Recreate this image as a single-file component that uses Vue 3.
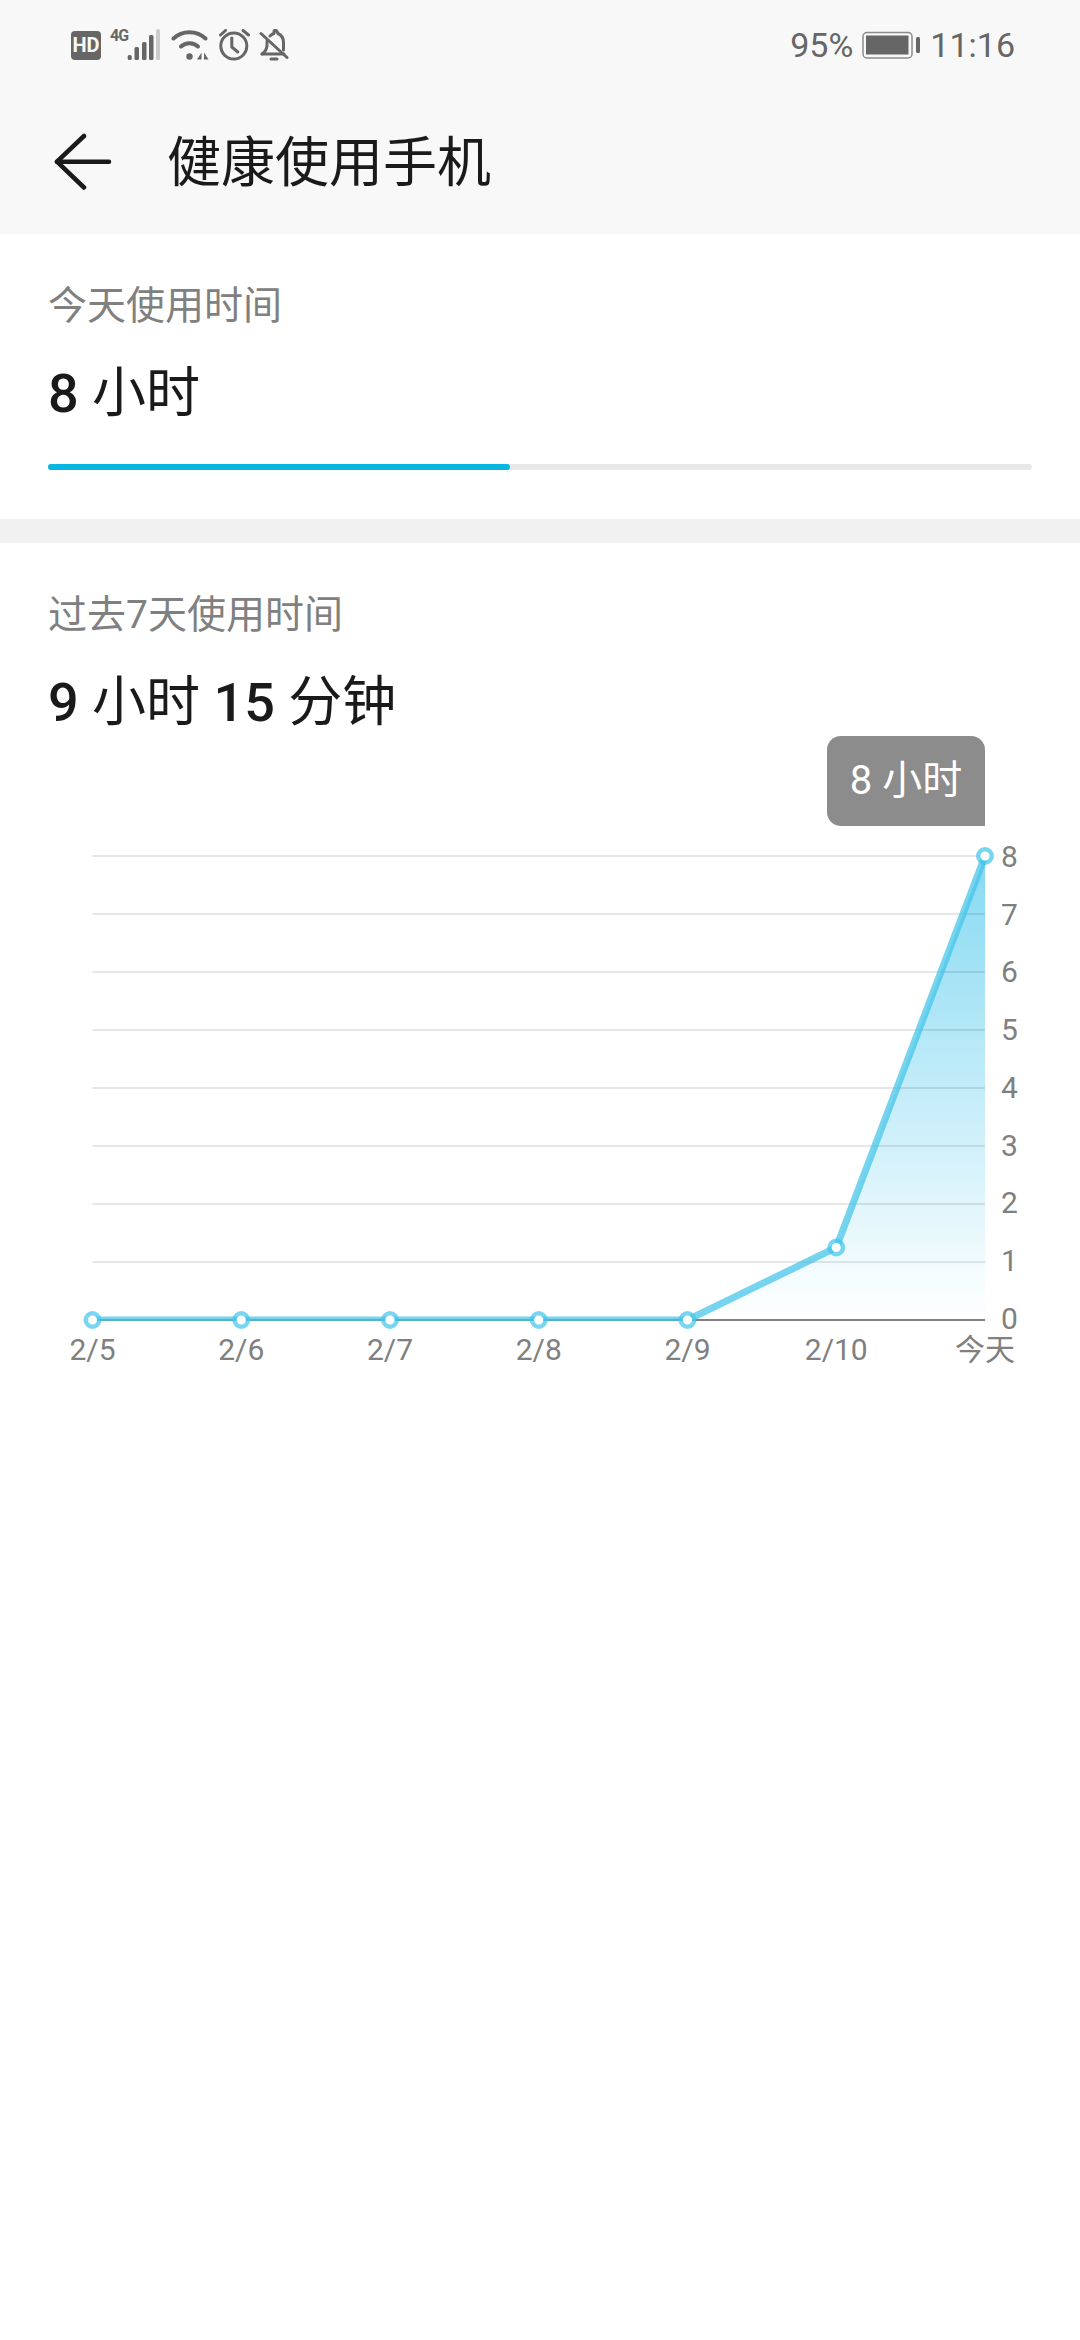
<script setup>
// 健康使用手机 - usage screen, chart drawn from the data below
const days = ['2/5', '2/6', '2/7', '2/8', '2/9', '2/10', '今天']
const hours = [0, 0, 0, 0, 0, 1.25, 8]

const left = 92.5
const right = 985
const base = 1320
const step = 58

const xAt = (i) => left + (i * (right - left)) / 6
const yAt = (v) => base - v * step

const points = hours.map((h, i) => ({ x: xAt(i), y: yAt(h) }))
const linePath = points.map((p) => `${p.x},${p.y}`).join(' ')
const areaPath = `${left},${base} ${linePath} ${right},${base}`
const gridLines = [1, 2, 3, 4, 5, 6, 7, 8].map(yAt)
const yLabels = [0, 1, 2, 3, 4, 5, 6, 7, 8]
// the axis numbers sit a little closer together than the grid lines
const tickY = (v) => yAt(v) + 8.7 + v * 0.29
</script>

<template>
  <div class="page">
    <header class="top">
      <div class="status">
        <div class="status-left">
          <div class="hd">HD</div>
          <div class="net">
            <span class="net-4g">4G</span>
            <svg class="signal" width="34" height="32" viewBox="128 29 34 32">
              <rect x="128.7" y="55" width="4" height="5" rx="1.5" fill="#666" />
              <rect x="135.5" y="47" width="4.5" height="13" rx="1.5" fill="#666" />
              <rect x="143" y="42" width="4.5" height="18" rx="1.5" fill="#666" />
              <rect x="150" y="35" width="4.5" height="25" rx="1.5" fill="#666" />
              <rect x="157" y="29" width="4" height="31" rx="1.5" fill="#ccc" />
            </svg>
          </div>
          <svg class="wifi" width="38" height="32" viewBox="170 29 38 32" fill="none" stroke="#666" stroke-width="4" stroke-linecap="round">
            <path d="M172.500 38.500C181 30 196 30 204.500 38.500" />
            <path d="M180 46.500C184.500 42 192.500 42 197 46.500" />
            <circle cx="188.500" cy="56.500" r="3.200" fill="#666" stroke="none" />
            <path d="M200.500 52.500l-4.500 7h4.500z" fill="#666" stroke="none" />
            <path d="M203 52.500l4.500 7h-4.500z" fill="#666" stroke="none" />
          </svg>
          <svg width="32" height="32" viewBox="216 29 32 32" fill="none" stroke="#666" stroke-width="3" stroke-linecap="round" stroke-linejoin="round">
            <circle cx="231.800" cy="46" r="13" />
            <path d="M229.800 38v9l6 5" />
            <path d="M218.500 35l5-4.500M241 30.500l5.500 4.500" />
          </svg>
          <svg width="30" height="32" viewBox="259 29 30 32" fill="none" stroke="#666" stroke-width="3" stroke-linecap="round" stroke-linejoin="round">
            <path d="M262 54h22" />
            <path d="M262 54c3-2 5-4 5-9v-4" />
            <path d="M270 36c1.500-1.500 3-2.200 4-2.500V31.500c0-1.500 2.500-1.500 3 0l1 2c3.500 1.500 5.500 4.500 5.500 9V50" />
            <path d="M261 33.500l26 24" />
            <path d="M271 59h6" />
          </svg>
        </div>
        <div class="status-right">
          <span>95%</span>
          <svg class="battery" width="59" height="28" viewBox="862 31 59 28">
            <rect x="863" y="32.500" width="49" height="25.500" rx="4" fill="none" stroke="#8a8a8a" stroke-width="1.500" />
            <rect x="866" y="35.500" width="42.500" height="19" fill="#666" />
            <rect x="916" y="37" width="4" height="16" rx="1.500" fill="#666" />
          </svg>
          <span>11:16</span>
        </div>
      </div>
      <div class="nav">
        <svg class="back" width="58" height="58" viewBox="54 133 58 58" fill="none" stroke="#1a1a1a" stroke-width="4.500" stroke-linecap="round" stroke-linejoin="round">
          <path d="M84 136L57 161.700L84 187.500" />
          <path d="M57 161.700H109" />
        </svg>
        <h1 class="title">健康使用手机</h1>
      </div>
    </header>

    <section class="today">
      <div class="label">今天使用时间</div>
      <div class="value"><span class="num">8</span> 小时</div>
      <div class="track"><div class="fill"></div></div>
    </section>

    <div class="band"></div>

    <section class="week">
      <div class="label">过去7天使用时间</div>
      <div class="value"><span class="num">9</span> 小时 <span class="num">15</span> 分钟</div>
    </section>

    <div class="chart">
      <svg width="1080" height="649" viewBox="0 731 1080 649">
        <defs>
          <linearGradient id="area" x1="0" y1="0" x2="0" y2="1">
            <stop offset="0" stop-color="#86d9f2" />
            <stop offset="1" stop-color="#ffffff" />
          </linearGradient>
          <clipPath id="above-axis">
            <rect x="0" y="730" width="1080" height="591" />
          </clipPath>
        </defs>
        <polygon :points="areaPath" fill="url(#area)" />
        <line
          v-for="y in gridLines"
          :key="y"
          :x1="left"
          :x2="right"
          :y1="y"
          :y2="y"
          stroke="#000"
          stroke-opacity="0.13"
          stroke-width="1.500"
        />
        <line :x1="left" :x2="right" :y1="base" :y2="base" stroke="#808080" stroke-width="2" />
        <polyline
          :points="linePath"
          clip-path="url(#above-axis)"
          fill="none"
          stroke="#41c4e9"
          stroke-opacity="0.72"
          stroke-width="7"
        />
        <g v-for="p in points" :key="p.x">
          <circle :cx="p.x" :cy="p.y" r="5" fill="#fff" />
          <circle :cx="p.x" :cy="p.y" r="6.750" fill="none" stroke="#41c4e9" stroke-opacity="0.7" stroke-width="4.500" />
        </g>
        <text
          v-for="v in yLabels"
          :key="v"
          class="tick"
          x="1001"
          :y="tickY(v)"
        >{{ v }}</text>
        <text
          v-for="(d, i) in days"
          :key="d"
          class="tick"
          text-anchor="middle"
          :x="xAt(i)"
          y="1360"
        >{{ d }}</text>
      </svg>
      <div class="tip">8 小时</div>
    </div>
  </div>
</template>

<style>
html, body { margin: 0; background: #fff; }
</style>

<style scoped>
.page {
  width: 1080px;
  height: 2340px;
  background: #fff;
  font-family: Roboto, "Noto Sans CJK SC", sans-serif;
  overflow: hidden;
}

.top { height: 234px; background: #f8f8f8; }

.status {
  height: 90px;
  display: flex;
  justify-content: space-between;
  align-items: center;
  padding: 0 65px 0 71px;
}
.status-left { display: flex; align-items: center; gap: 9px; }
.hd {
  width: 30px;
  height: 29px;
  border-radius: 4px;
  background: #666;
  color: #f8f8f8;
  font-size: 20px;
  font-weight: 700;
  line-height: 29px;
  text-align: center;
}
.net { position: relative; width: 51px; height: 32px; display: flex; justify-content: flex-end; }
.net-4g {
  position: absolute;
  left: 0;
  top: -2px;
  color: #666;
  font-size: 16px;
  font-weight: 700;
  line-height: 18px;
  letter-spacing: -1px;
}
.wifi { margin-left: 1px; }
.status-right {
  display: flex;
  align-items: center;
  gap: 9px;
  color: #666;
  font-size: 34px;
}

.nav { height: 144px; display: flex; align-items: center; padding-left: 54px; box-sizing: border-box; }
.back { flex: none; }
.title {
  margin: 4px 0 0 55px;
  font-size: 54px;
  font-weight: 400;
  color: #1a1a1a;
  line-height: 70px;
}

.today { height: 285px; padding: 46px 48px 0; box-sizing: border-box; }
.band { height: 24px; background: #f1f1f1; }
.week { height: 188px; padding: 46px 48px 0; box-sizing: border-box; }

.label {
  height: 52px;
  font-size: 39px;
  line-height: 52px;
  color: #808080;
}
.value {
  margin-top: 34px;
  height: 56px;
  font-size: 54px;
  line-height: 56px;
  color: #1a1a1a;
}
.num { font-weight: 500; }
.track {
  margin-top: 42px;
  height: 6px;
  width: 984px;
  border-radius: 3px;
  background: #e8e8e8;
}
.fill {
  width: 462px;
  height: 6px;
  border-radius: 3px;
  background: #06b6e0;
}

.chart { position: relative; height: 649px; }
.chart svg { display: block; }
.tick {
  font-size: 30px;
  fill: #808080;
}
.tip {
  position: absolute;
  left: 827px;
  top: 5px;
  width: 158px;
  height: 90px;
  border-radius: 14px 14px 0 14px;
  background: #8c8c8c;
  color: #fff;
  font-size: 40px;
  line-height: 90px;
  text-align: center;
}
</style>
